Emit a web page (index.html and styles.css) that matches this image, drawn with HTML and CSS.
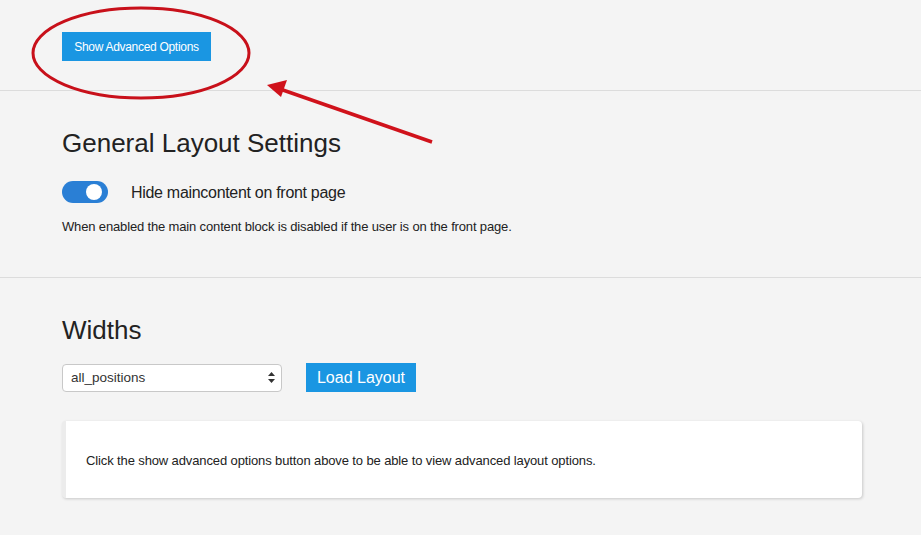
FILE: index.html
```html
<!DOCTYPE html>
<html lang="en">
<head>
    <meta charset="UTF-8">
    <meta name="viewport" content="width=device-width, initial-scale=1.0">
    <title>Layout Settings</title>
    <link rel="stylesheet" href="styles.css">
</head>
<body>
    <div class="section section-top">
        <button type="button" class="btn btn-small">Show Advanced Options</button>
    </div>

    <div class="section section-general">
        <h2>General Layout Settings</h2>
        <div class="toggle-row">
            <span class="toggle on"><span class="knob"></span></span>
            <span class="toggle-label">Hide maincontent on front page</span>
        </div>
        <p class="help">When enabled the main content block is disabled if the user is on the front page.</p>
    </div>

    <div class="section section-widths">
        <h2>Widths</h2>
        <div class="load-row">
            <div class="select">
                <span>all_positions</span>
                <svg class="arrows" width="7" height="11" viewBox="0 0 7 11">
                    <path d="M3.5 0 L7 4 L0 4 Z M3.5 11 L7 7 L0 7 Z" fill="#333"/>
                </svg>
            </div>
            <button type="button" class="btn btn-large">Load Layout</button>
        </div>
        <div class="card">
            Click the show advanced options button above to be able to view advanced layout options.
        </div>
    </div>

    <!-- annotation drawn over the page -->
    <svg class="annotation" width="921" height="535" viewBox="0 0 921 535">
        <ellipse cx="141" cy="53" rx="108" ry="45" fill="none" stroke="#c8101a" stroke-width="3"/>
        <line x1="432" y1="142" x2="280" y2="89" stroke="#d0121b" stroke-width="3.5"/>
        <path d="M267 85 L287 80 L281 97 Z" fill="#d0121b"/>
    </svg>
</body>
</html>
```

FILE: styles.css
```css
/* page layout */
body {
    font-family: "Liberation Sans", Arial, sans-serif;
    margin: 0;
    padding: 0;
    background-color: #f4f4f4;
    color: #222;
    position: relative;
    min-height: 535px;
    overflow: hidden;
}
.section {
    padding: 0 59px 0 62px;
    border-bottom: 1px solid #dcdcdc;
}
.section-top {
    padding-top: 32px;
    padding-bottom: 29px;
}
.section-general {
    padding-top: 37px;
    padding-bottom: 41px;
}
.section-widths {
    padding-top: 37px;
    padding-bottom: 38px;
    border-bottom: none;
}
h2 {
    margin: 0;
    font-size: 26px;
    font-weight: normal;
    line-height: 30px;
    color: #222;
}
.btn {
    border: none;
    border-radius: 0;
    background-color: #1a96e2;
    color: white;
    font-family: inherit;
    cursor: pointer;
    padding: 0;
}
.btn:hover {
    background-color: #1380c4;
}
.btn-small {
    width: 149px;
    height: 29px;
    font-size: 12px;
    letter-spacing: -0.3px;
}
.btn-large {
    width: 110px;
    height: 29px;
    font-size: 16px;
}
.toggle-row {
    display: flex;
    align-items: center;
    gap: 23px;
    margin-top: 23px;
}
.toggle {
    display: inline-block;
    position: relative;
    width: 46px;
    height: 22px;
    border-radius: 11px;
    background-color: #2a7fd5;
}
.toggle .knob {
    position: absolute;
    top: 3px;
    right: 6px;
    width: 16px;
    height: 16px;
    border-radius: 50%;
    background: white;
}
.toggle-label {
    font-size: 16px;
    letter-spacing: -0.3px;
    padding-top: 2px;
}
.help {
    margin: 15px 0 0;
    font-size: 13px;
    line-height: 18px;
    letter-spacing: -0.15px;
}
.load-row {
    display: flex;
    align-items: center;
    gap: 24px;
    margin-top: 18px;
}
.select {
    box-sizing: border-box;
    width: 220px;
    height: 28px;
    display: flex;
    align-items: center;
    justify-content: space-between;
    padding: 0 6px 0 8px;
    background: white;
    border: 1px solid #c8c8c8;
    border-radius: 4px;
    font-size: 13.5px;
    color: #333;
}
.card {
    margin-top: 29px;
    height: 77px;
    box-sizing: border-box;
    display: flex;
    align-items: center;
    padding: 2px 20px 0 20px;
    background: white;
    border-left: 4px solid #ececec;
    border-radius: 4px;
    box-shadow: 1px 1px 3px rgba(0, 0, 0, 0.18);
    font-size: 13px;
    letter-spacing: -0.12px;
}
.annotation {
    position: absolute;
    left: 0;
    top: 0;
    pointer-events: none;
}
```
